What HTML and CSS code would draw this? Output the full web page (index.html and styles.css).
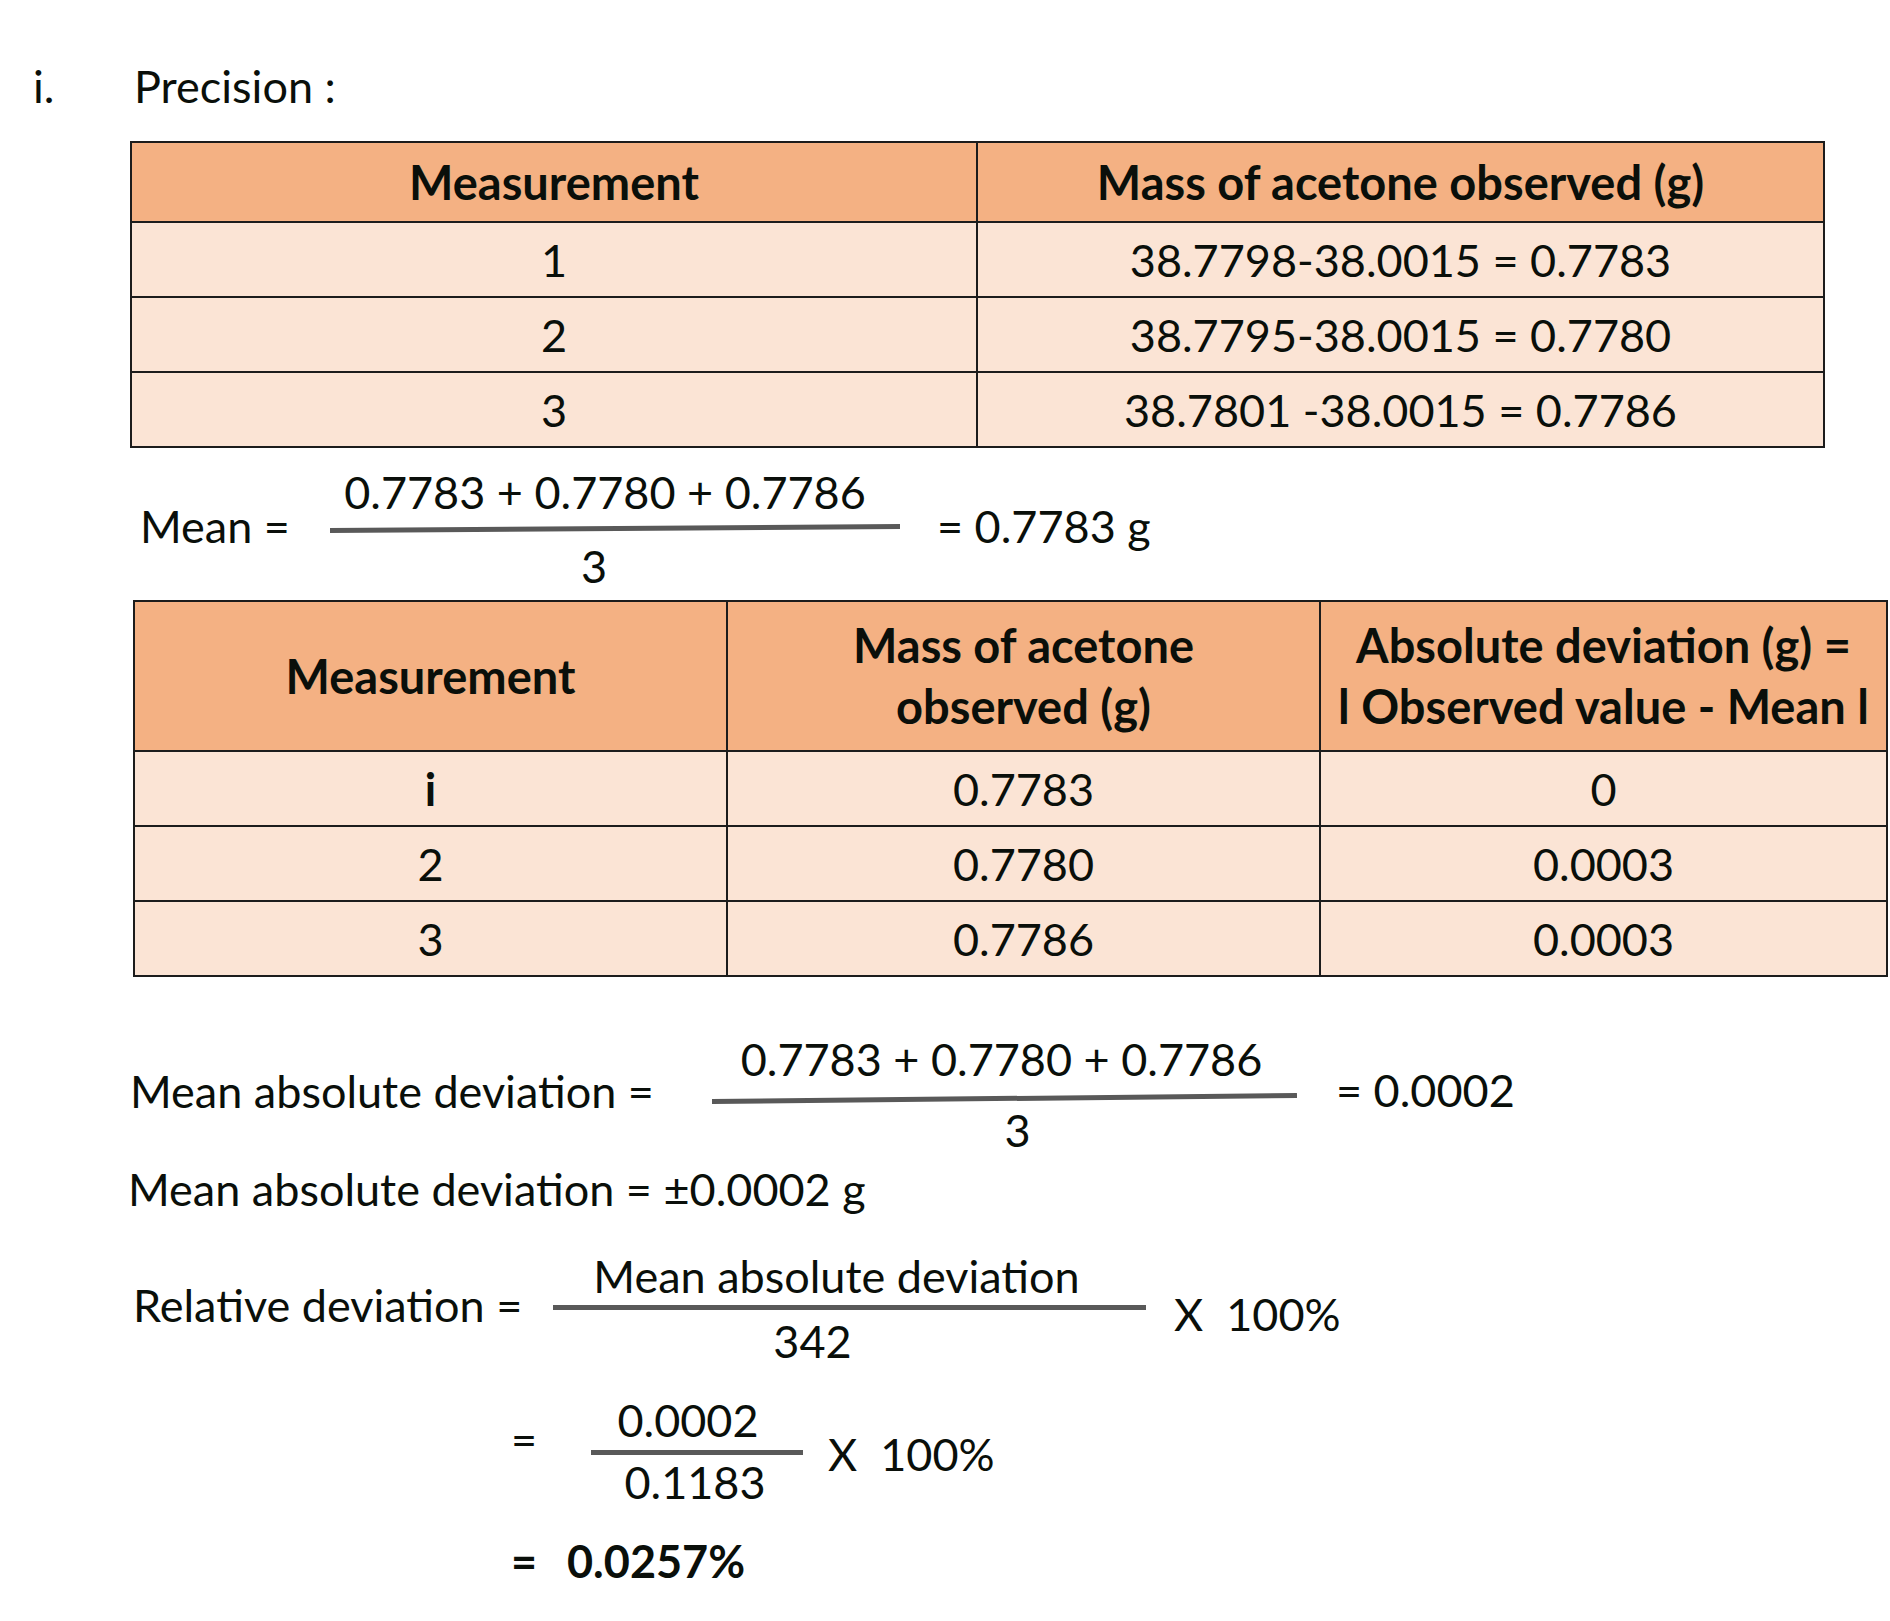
FILE: index.html
```html
<!DOCTYPE html>
<html lang="en">
<head>
<meta charset="utf-8">
<title>Precision</title>
<link rel="stylesheet" href="styles.css">
</head>
<body>
<div class="page">
  <div class="title">
    <span class="num">i.</span>
    <span>Precision :</span>
  </div>

  <table class="t1">
    <colgroup><col class="c1a"><col class="c1b"></colgroup>
    <tr class="head"><th>Measurement</th><th>Mass of acetone observed (g)</th></tr>
    <tr><td>1</td><td>38.7798-38.0015 = 0.7783</td></tr>
    <tr><td>2</td><td>38.7795-38.0015 = 0.7780</td></tr>
    <tr><td>3</td><td>38.7801 -38.0015 = 0.7786</td></tr>
  </table>

  <div class="frow mean">
    <span class="lbl">Mean =</span>
    <div class="frac">
      <div class="fnum">0.7783 + 0.7780 + 0.7786</div>
      <div class="fline"></div>
      <div class="fden">3</div>
    </div>
    <span class="suf">= 0.7783 g</span>
  </div>

  <table class="t2">
    <colgroup><col class="c2a"><col class="c2b"><col class="c2c"></colgroup>
    <tr class="head">
      <th>Measurement</th>
      <th>Mass of acetone<br>observed (g)</th>
      <th>Absolute deviation (g) =<br>l Observed value - Mean l</th>
    </tr>
    <tr><td class="b">i</td><td>0.7783</td><td>0</td></tr>
    <tr><td>2</td><td>0.7780</td><td>0.0003</td></tr>
    <tr><td>3</td><td>0.7786</td><td>0.0003</td></tr>
  </table>

  <div class="frow mad">
    <span class="lbl">Mean absolute deviation =</span>
    <div class="frac">
      <div class="fnum">0.7783 + 0.7780 + 0.7786</div>
      <div class="fline"></div>
      <div class="fden">3</div>
    </div>
    <span class="suf">= 0.0002</span>
  </div>

  <div class="line mad2">Mean absolute deviation = ±0.0002 g</div>

  <div class="frow rd">
    <span class="lbl">Relative deviation =</span>
    <div class="frac">
      <div class="fnum">Mean absolute deviation</div>
      <div class="fline"></div>
      <div class="fden">342</div>
    </div>
    <span class="suf">X  100%</span>
  </div>

  <div class="frow rd2">
    <span class="lbl">=</span>
    <div class="frac">
      <div class="fnum">0.0002</div>
      <div class="fline"></div>
      <div class="fden">0.1183</div>
    </div>
    <span class="suf">X  100%</span>
  </div>

  <div class="line result">
    <span class="eq">=</span><span>0.0257%</span>
  </div>
</div>
</body>
</html>
```

FILE: styles.css
```css
html, body {
  margin: 0;
  padding: 0;
  background: #ffffff;
}

body {
  font-family: Lato, "Liberation Sans", Arial, sans-serif;
  font-size: 45px;
  color: #0a0f0a;
  width: 1890px;
  overflow: hidden;
}

.page {
  padding-top: 61px;
  padding-bottom: 40px;
}

.title {
  display: flex;
  line-height: 50px;
  padding-left: 33px;
}

.title .num {
  width: 101px;
}

table {
  border-collapse: collapse;
  table-layout: fixed;
  text-align: center;
}

th, td {
  border: 2px solid #1c1c1c;
  padding: 0;
  line-height: 50px;
}

th {
  background: #f4b183;
  font-weight: 700;
  font-size: 47px;
}

td {
  background: #fbe4d5;
  font-weight: 400;
}

td.b {
  font-weight: 700;
}

.t1 {
  margin-top: 30px;
  margin-left: 130px;
  width: 1693px;
}

.c1a { width: 846px; }
.c1b { width: 847px; }

.t1 tr { height: 75px; }
.t1 tr.head { height: 80px; }

.t2 {
  margin-top: 9px;
  margin-left: 133px;
  width: 1753px;
}

.c2a { width: 593px; }
.c2b { width: 593px; }
.c2c { width: 567px; }

.t2 tr { height: 75px; }
.t2 tr.head { height: 150px; }
.t2 th { line-height: 61px; }

/* fractions */
.frow {
  display: flex;
  align-items: center;
  line-height: 50px;
}

.lbl {
  flex: none;
  white-space: nowrap;
}

.frac {
  flex: none;
  display: flex;
  flex-direction: column;
}

.fnum, .fden {
  text-align: center;
  white-space: nowrap;
}

.fline {
  height: 5px;
  background: #595959;
}

.suf {
  flex: none;
  white-space: pre;
}

.mean {
  margin-top: 19px;
  padding-left: 140px;
}
.mean .lbl { width: 190px; padding-bottom: 6px; }
.mean .frac { width: 570px; }
.mean .fnum { padding-right: 20px; }
.mean .fden { padding-right: 42px; margin-top: 10px; }
.mean .fline { margin-top: 9px; transform: rotate(-0.4deg); }
.mean .suf { margin-left: 37px; padding-bottom: 6px; }

.mad {
  margin-top: 57px;
  padding-left: 130px;
}
.mad .lbl { width: 582px; padding-bottom: 8px; }
.mad .frac { width: 585px; }
.mad .fnum { padding-right: 6px; }
.mad .fden { padding-left: 26px; margin-top: 4px; }
.mad .fline { margin-top: 12px; transform: rotate(-0.6deg); }
.mad .suf { margin-left: 39px; padding-bottom: 10px; }

.line {
  line-height: 50px;
  white-space: nowrap;
}

.mad2 {
  margin-top: 9px;
  padding-left: 128px;
}

.rd {
  margin-top: 37px;
  padding-left: 133px;
}
.rd .lbl { width: 420px; padding-bottom: 8px; }
.rd .frac { width: 593px; }
.rd .fnum { padding-right: 26px; }
.rd .fden { padding-right: 74px; margin-top: 6px; }
.rd .fline { margin-top: 4px; }
.rd .suf { margin-left: 28px; padding-top: 10px; }

.rd2 {
  margin-top: 29px;
  padding-left: 511px;
}
.rd2 .lbl { width: 80px; padding-bottom: 24px; }
.rd2 .frac { width: 212px; }
.rd2 .fnum { padding-right: 18px; }
.rd2 .fden { padding-right: 4px; margin-top: 2px; }
.rd2 .fline { margin-top: 5px; }
.rd2 .suf { margin-left: 25px; padding-top: 6px; }

.result {
  margin-top: 29px;
  padding-left: 511px;
  font-weight: 700;
  display: flex;
}
.result .eq { width: 56px; }
```
